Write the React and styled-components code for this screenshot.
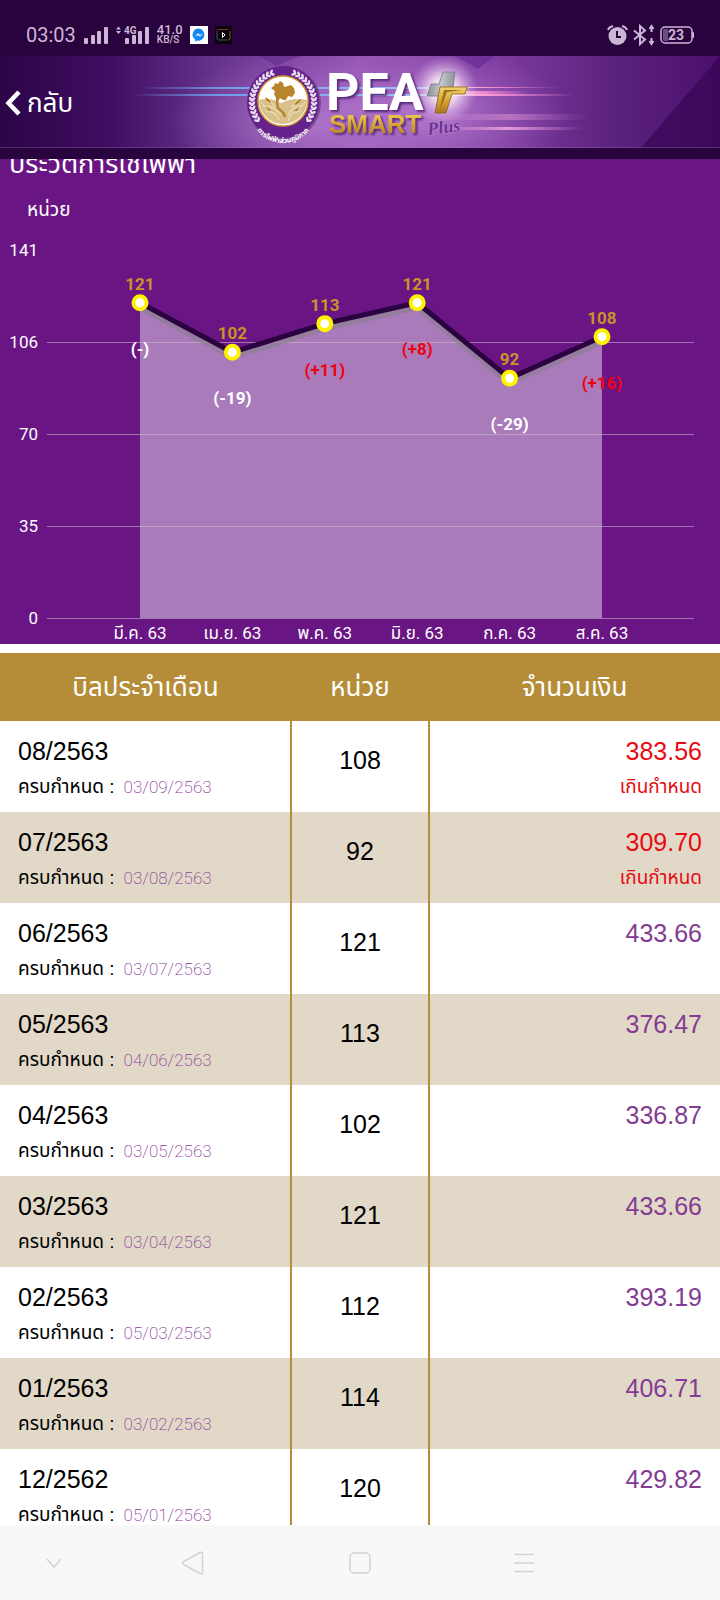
import styled, { createGlobalStyle } from 'styled-components';

const GlobalStyle = createGlobalStyle`
  * {
    box-sizing: border-box;
  }
  body {
    margin: 0;
    font-family: 'Liberation Sans', 'Noto Sans Thai', sans-serif;
    background: #fff;
  }
`;

const Screen = styled.div`
  display: flex;
  flex-direction: column;
  height: 100vh;
  overflow: hidden;
`;

const StatusBar = styled.div`
  display: flex;
  align-items: center;
  justify-content: space-between;
  height: 56px;
  flex: none;
  padding: 14px 26px 0;
  background: #29033d;
  color: #cbb6d6;
  font-family: Roboto, sans-serif;
`;

const StatusGroup = styled.div`
  display: flex;
  align-items: center;
  gap: ${props => props.$gap}px;
`;

const Clock = styled.span`
  font-size: 20px;
`;

const Speed = styled.span`
  display: flex;
  flex-direction: column;
  font-size: 13px;
  line-height: 10px;
  font-weight: 500;
`;

const SpeedUnit = styled.span`
  font-size: 10px;
`;

const Header = styled.header`
  position: relative;
  display: flex;
  align-items: center;
  flex: none;
  height: 103px;
  padding-bottom: 10px;
  background: #29033d;
`;

const Banner = styled.svg`
  position: absolute;
  top: 0;
  left: 0;
  width: 100%;
  height: 92px;
`;

const LogoText = styled.text`
  filter: drop-shadow(2px 2px 1px #56287a);
`;

const BackButton = styled.button`
  position: relative;
  display: flex;
  align-items: center;
  gap: 6px;
  padding: 0 5px;
  border: none;
  background: none;
  color: #fff;
  font-family: inherit;
  font-size: 26px;
  line-height: 40px;
  cursor: pointer;
`;

const Content = styled.main`
  flex: 1;
  min-height: 0;
  overflow: hidden;
`;

const History = styled.section`
  background: #6a1584;
  color: #fff;
  margin-bottom: 9px;
`;

/* the page is scrolled, so only the lower part of the title shows */
const TitleClip = styled.div`
  display: flex;
  align-items: flex-end;
  height: 24px;
  overflow: hidden;
  padding: 0 9px;
`;

const Title = styled.h1`
  margin: 0;
  font-size: 27px;
  line-height: 38px;
  font-weight: 400;
`;

const UnitLabel = styled.div`
  padding: 13px 27px 12px;
  font-size: 19px;
  line-height: 28px;
`;

const ChartSvg = styled.svg`
  display: block;
  width: 100%;
  font-family: Roboto, 'Noto Sans Thai', sans-serif;
  font-size: 17px;
`;

const Table = styled.table`
  width: 100%;
  table-layout: fixed;
  border-collapse: collapse;
`;

const HeadCell = styled.th`
  width: ${props => props.$width};
  height: 68px;
  padding: 0;
  background: #b58d38;
  color: #fff;
  font-size: 26px;
  line-height: 36px;
  font-weight: 400;
`;

const Row = styled.tr`
  background: #fff;
  &:nth-child(even) {
    background: #e1d8c8;
  }
`;

const Cell = styled.td`
  padding: ${props => (props.$middle ? '21px' : '12px')} 18px 11px;
  vertical-align: top;
  text-align: ${props => props.$align || 'left'};
  border-left: ${props => (props.$line ? '2px solid #b58d38' : 'none')};
`;

const Main = styled.div`
  font-size: 25px;
  line-height: 36px;
  color: ${props => props.$color || '#000'};
`;

const Sub = styled.div`
  margin-top: 4px;
  font-size: 19px;
  line-height: 28px;
  color: ${props => props.$color || '#000'};
`;

const DueDate = styled.span`
  margin-left: 9px;
  font-family: Roboto, sans-serif;
  font-size: 17px;
  font-weight: 200;
  color: #8a3f98;
`;

const NavBar = styled.nav`
  display: grid;
  grid-template-columns: 15% 23.6% 22.8% 22.8%;
  flex: none;
  height: 75px;
  background: #f8f8f8;
`;

const NavButton = styled.button`
  display: flex;
  align-items: center;
  justify-content: center;
  padding: 0;
  border: none;
  background: none;
  color: #d2d2d2;
`;

const points = [
  { month: 'มี.ค. 63', value: 121, diff: '(-)' },
  { month: 'เม.ย. 63', value: 102, diff: '(-19)' },
  { month: 'พ.ค. 63', value: 113, diff: '(+11)' },
  { month: 'มิ.ย. 63', value: 121, diff: '(+8)' },
  { month: 'ก.ค. 63', value: 92, diff: '(-29)' },
  { month: 'ส.ค. 63', value: 108, diff: '(+16)' },
];

const bills = [
  { month: '08/2563', due: '03/09/2563', units: 108, amount: '383.56', overdue: true },
  { month: '07/2563', due: '03/08/2563', units: 92, amount: '309.70', overdue: true },
  { month: '06/2563', due: '03/07/2563', units: 121, amount: '433.66' },
  { month: '05/2563', due: '04/06/2563', units: 113, amount: '376.47' },
  { month: '04/2563', due: '03/05/2563', units: 102, amount: '336.87' },
  { month: '03/2563', due: '03/04/2563', units: 121, amount: '433.66' },
  { month: '02/2563', due: '05/03/2563', units: 112, amount: '393.19' },
  { month: '01/2563', due: '03/02/2563', units: 114, amount: '406.71' },
  { month: '12/2562', due: '05/01/2563', units: 120, amount: '429.82' },
];

const Signal = ({ network }) => (
  <svg width={network ? 34 : 26} height="20" viewBox={network ? '-8 0 34 20' : '0 0 26 20'} fill="currentColor">
    <rect x="1" y="13" width="4" height="6" rx="1" />
    <rect x="8" y="10" width="4" height="9" rx="1" />
    <rect x="14" y="6" width="4" height="13" rx="1" />
    <rect x="21" y="2" width="4" height="17" rx="1" />
    {network && (
      <>
        <path d="M-8 4.500L-5.500 1.500L-3 4.500ZM-8 6L-5.500 9L-3 6Z" />
        <rect x="0" y="1" width="13" height="9" fill="#29033d" />
        <text x="0" y="9" fontSize="10" fontWeight="700">4G</text>
      </>
    )}
  </svg>
);

const MessengerIcon = () => (
  <svg width="18" height="18" viewBox="0 0 18 18">
    <rect width="18" height="18" fill="#fff" />
    <path d="M9 2.500a6.300 6.100 0 0 0-3.800 11v2.200l2-1.100A6.300 6.100 0 1 0 9 2.500Z" fill="#1686f5" />
    <path d="M5 10.500L8 7.300L10 9L13 7.300L10 10.500L8 8.900Z" fill="#fff" />
  </svg>
);

const RecorderIcon = () => (
  <svg width="17" height="18" viewBox="0 0 17 18">
    <rect width="17" height="18" fill="#0c0409" />
    <path d="M2 7V5Q2 3.500 4 3.500H13" fill="none" stroke="#80332e" />
    <path d="M15 5V13Q15 14 13 14" fill="none" stroke="#6a5c2c" />
    <path d="M12 14H4Q2 14 2 12V7" fill="none" stroke="#28606c" />
    <path d="M7.500 6.500L10 9L7.500 11.500Z" fill="none" stroke="#fff" />
  </svg>
);

const AlarmIcon = () => (
  <svg width="21" height="22" viewBox="0 0 21 22" fill="none" stroke="currentColor" strokeWidth="2">
    <circle cx="10.500" cy="12" r="9" fill="currentColor" stroke="none" />
    <path d="M1 6Q2 3 6 2M20 6Q19 3 15 2" />
    <path d="M10 7V13H14" stroke="#29033d" />
  </svg>
);

const BluetoothIcon = () => (
  <svg width="22" height="22" viewBox="0 0 22 22" fill="none" stroke="currentColor" strokeWidth="2">
    <path d="M1 6.500L12 15.500L7 20V2L12 6.500L1 15.500" />
    <path d="M18.500 2V8M18.500 14V20" />
    <path d="M16.500 5L18.500 2L20.500 5M16.500 17L18.500 20L20.500 17" />
  </svg>
);

const BatteryIcon = () => (
  <svg width="34" height="18" viewBox="0 0 34 18">
    <rect x="1" y="1" width="31" height="16" rx="4" fill="none" stroke="currentColor" strokeWidth="1.500" />
    <path d="M4 3H8V15H4Q3 15 3 14V4Q3 3 4 3Z" fill="#6d4d80" />
    <rect x="32" y="6" width="2" height="6" rx="1" fill="currentColor" />
    <text x="16" y="14" textAnchor="middle" fontSize="14" fontWeight="700" fill="currentColor">23</text>
  </svg>
);

const leaves = [...Array(14).keys()].map(i => 142 + i * 8);

const Seal = () => (
  <g transform="translate(283 46)">
    <circle r="37" cx="1" cy="1" fill="#5d3470" opacity="0.6" />
    <circle r="36" fill="#65228c" />
    {[1, -1].map(side => (
      <g key={side} transform={`scale(${side} 1)`} fill="#e9dcf1">
        {leaves.map(angle => (
          <g key={angle} transform={`rotate(${angle}) translate(31 0)`}>
            <ellipse cx="2" cy="0" rx="2.600" ry="1.300" transform="rotate(50)" />
            <ellipse cx="-2" cy="0" rx="2.600" ry="1.300" transform="rotate(-50)" />
          </g>
        ))}
      </g>
    ))}
    <circle r="25" cy="-1" fill="#fff" stroke="#d69d2c" strokeWidth="1.500" />
    <path d="M-24 -2Q-12 -5 -2 1Q10 -5 24 -2A24 24 0 0 1 -24 -2Z" fill="#d8c08b" />
    <path
      d="M-20 4Q-10 3 -2 13M-18 10Q-8 8 -4 18M20 4Q10 3 5 13M18 10Q8 8 5 19M-14 -3L-8 5M16 -3L9 5M-22 0L-14 9M22 0L15 9"
      fill="none"
      stroke="#eddcb0"
      strokeWidth="1.200"
    />
    <path d="M-18 -5Q-13 -3 -12 1Q-17 -1 -18 -5ZM18 -3Q13 -1 11 3Q17 1 18 -3ZM-18 4L-12 8L-14 9ZM17 5L11 9L14 9Z" fill="#a97820" />
    <path
      d="M-12 -14L-9 -16L-8 -19L-5 -18L-3 -21L0 -19L1 -15L5 -16L8 -17L11 -14L12 -9L9 -5L5 -6L3 -2L0 -2L-3 -4L-5 0L-4 5L-1 8L2 11L3 15L1 15L-2 10L-6 7L-7 2L-7 -4L-9 -8L-8 -11Z"
      fill="#b8852a"
    />
    <path id="sealArc" d="M-33 8A33 33 0 0 0 33 8" fill="none" />
    <text fontSize="7" fontWeight="700" fill="#fff" textAnchor="middle">
      <textPath href="#sealArc" startOffset="50%">การไฟฟ้าส่วนภูมิภาค</textPath>
    </text>
  </g>
);

const HeaderBanner = () => (
  <Banner viewBox="0 0 720 92" preserveAspectRatio="xMidYMid slice" aria-label="PEA Smart Plus">
    <defs>
      <linearGradient id="base">
        <stop offset="0" stopColor="#2c0548" />
        <stop offset="0.15" stopColor="#3f0d61" />
        <stop offset="0.3" stopColor="#66338c" />
        <stop offset="0.5" stopColor="#9657b6" />
        <stop offset="0.7" stopColor="#7b3b9e" />
        <stop offset="0.85" stopColor="#5c227f" />
        <stop offset="1" stopColor="#4a106c" />
      </linearGradient>
      <radialGradient id="glow">
        <stop offset="0" stopColor="#c08ad8" stopOpacity="0.7" />
        <stop offset="1" stopColor="#b070cc" stopOpacity="0" />
      </radialGradient>
      <radialGradient id="flare">
        <stop offset="0" stopColor="#fff" />
        <stop offset="0.4" stopColor="#fff0fa" stopOpacity="0.8" />
        <stop offset="1" stopColor="#e0b0ef" stopOpacity="0" />
      </radialGradient>
      <linearGradient id="blue">
        <stop offset="0" stopColor="#66a4ee" stopOpacity="0" />
        <stop offset="0.3" stopColor="#6f9fea" />
        <stop offset="1" stopColor="#a9c8f6" />
      </linearGradient>
      <linearGradient id="pink">
        <stop offset="0" stopColor="#ffe0f4" />
        <stop offset="0.5" stopColor="#f083cc" />
        <stop offset="1" stopColor="#c77bd0" stopOpacity="0" />
      </linearGradient>
      <linearGradient id="haze">
        <stop offset="0" stopColor="#d98fd4" stopOpacity="0" />
        <stop offset="0.5" stopColor="#e59bd6" />
        <stop offset="1" stopColor="#c77bd0" stopOpacity="0" />
      </linearGradient>
      <linearGradient id="gold" x2="0" y2="1">
        <stop offset="0" stopColor="#f6d56b" />
        <stop offset="0.5" stopColor="#d9a634" />
        <stop offset="1" stopColor="#a87720" />
      </linearGradient>
      <linearGradient id="silver">
        <stop offset="0" stopColor="#8b9097" />
        <stop offset="0.5" stopColor="#c4c8cc" />
        <stop offset="1" stopColor="#8d939b" />
      </linearGradient>
    </defs>
    <rect width="720" height="92" fill="url(#base)" />
    <ellipse cx="300" cy="65" rx="130" ry="70" fill="url(#glow)" />
    <ellipse cx="430" cy="60" rx="140" ry="70" fill="url(#glow)" />
    <path d="M720 0V92H641Z" fill="#350452" opacity="0.65" />
    <path d="M260 0H300L276 10ZM455 0H495L478 13Z" fill="#5b238a" opacity="0.5" />
    <rect x="140" y="31" width="300" height="2" fill="url(#blue)" />
    <rect x="130" y="38" width="310" height="2" fill="url(#blue)" />
    <rect x="440" y="31" width="120" height="1" fill="url(#pink)" />
    <rect x="440" y="35" width="90" height="3" fill="url(#pink)" />
    <rect x="440" y="38" width="135" height="2" fill="url(#pink)" />
    <rect x="430" y="58" width="160" height="6" fill="url(#haze)" opacity="0.5" />
    <rect x="430" y="71" width="155" height="3" fill="url(#haze)" />
    <rect y="91" width="720" height="1" fill="#a97cc4" opacity="0.3" />
    <Seal />
    <ellipse cx="444" cy="34" rx="34" ry="34" fill="url(#flare)" />
    <LogoText x="326" y="54" fontFamily="Roboto, sans-serif" fontSize="52" fontWeight="700" fill="#fff">
      PEA
    </LogoText>
    <LogoText x="329" y="77" fontSize="26" fontWeight="700" fill="url(#gold)">
      SMART
    </LogoText>
    <path d="M443 16H455L453 32H442L440 40H427L431 28H439Z" fill="url(#silver)" stroke="#767b85" strokeWidth="0.800" />
    <path d="M440 31H467L465 38H452L446 57H435Z" fill="url(#gold)" stroke="#8a6018" strokeWidth="0.800" />
    <path d="M444 34H463L447 36L440 53Z" fill="#6d450d" opacity="0.65" />
    <text
      x="428"
      y="79"
      transform="rotate(-7 428 79)"
      fontFamily="'Liberation Serif', serif"
      fontSize="18"
      fontStyle="italic"
      fontWeight="700"
      fill="#70309a"
      stroke="#c08fd0"
      strokeWidth="1"
      paintOrder="stroke"
    >
      Plus
    </text>
  </Banner>
);

const BASE = 382;
const xAt = i => 140 + i * 92.4;
const yAt = value => BASE - value * 2.605;

const Chart = () => {
  const line = points.map((p, i) => `${xAt(i)},${yAt(p.value)}`).join(' ');
  return (
    <ChartSvg viewBox="0 0 720 408">
      <polygon points={`140,${BASE} ${line} 602,${BASE}`} fill="#a97bba" />
      {[106, 70, 35, 0].map((tick, i) => (
        <line key={tick} x1="47" x2="694" y1={106.500 + i * 92} y2={106.500 + i * 92} stroke="#c9b8c9" strokeOpacity="0.6" />
      ))}
      {[141, 106, 70, 35, 0].map((tick, i) => (
        <text key={tick} x="38" y={20 + i * 92} textAnchor="end" fill="#fff">{tick}</text>
      ))}
      <polyline points={line} transform="translate(0 5)" fill="none" stroke="#808080" strokeOpacity="0.5" strokeWidth="5" />
      <polyline points={line} fill="none" stroke="#2a0340" strokeWidth="5" />
      {points.map((p, i) => (
        <g key={p.month} textAnchor="middle">
          <circle cx={xAt(i)} cy={yAt(p.value)} r="6.500" fill="#fff" stroke="#fff200" strokeWidth="4" />
          <text x={xAt(i)} y={yAt(p.value) - 13} fontWeight="700" fill="#c8922c">{p.value}</text>
          <text x={xAt(i)} y={yAt(p.value) + 52} fontWeight="700" fill={p.diff.includes('+') ? '#f0000f' : '#fff'}>
            {p.diff}
          </text>
          <text x={xAt(i)} y={403} fill="#fff">{p.month}</text>
        </g>
      ))}
    </ChartSvg>
  );
};

const BillRow = ({ bill }) => {
  const amountColor = bill.overdue ? '#e80b12' : '#843b93';
  return (
    <Row>
      <Cell>
        <Main>{bill.month}</Main>
        <Sub>
          ครบกำหนด :<DueDate>{bill.due}</DueDate>
        </Sub>
      </Cell>
      <Cell $align="center" $middle $line>
        <Main>{bill.units}</Main>
      </Cell>
      <Cell $align="right" $line>
        <Main $color={amountColor}>{bill.amount}</Main>
        {bill.overdue && <Sub $color={amountColor}>เกินกำหนด</Sub>}
      </Cell>
    </Row>
  );
};

const App = () => (
  <Screen>
    <GlobalStyle />
    <StatusBar>
      <StatusGroup $gap={7}>
        <Clock>03:03</Clock>
        <Signal />
        <Signal network />
        <Speed>
          <span>41.0</span>
          <SpeedUnit>KB/S</SpeedUnit>
        </Speed>
        <MessengerIcon />
        <RecorderIcon />
      </StatusGroup>
      <StatusGroup $gap={5}>
        <AlarmIcon />
        <BluetoothIcon />
        <BatteryIcon />
      </StatusGroup>
    </StatusBar>
    <Header>
      <HeaderBanner />
      <BackButton type="button">
        <svg width="16" height="26" viewBox="0 0 16 26" fill="none" stroke="#fff" strokeWidth="4.500">
          <path d="M14 2L3.500 13L14 24" />
        </svg>
        กลับ
      </BackButton>
    </Header>
    <Content>
      <History>
        <TitleClip>
          <Title>ประวัติการใช้ไฟฟ้า</Title>
        </TitleClip>
        <UnitLabel>หน่วย</UnitLabel>
        <Chart />
      </History>
      <Table>
        <thead>
          <tr>
            <HeadCell $width="40.4%">บิลประจำเดือน</HeadCell>
            <HeadCell $width="19.2%">หน่วย</HeadCell>
            <HeadCell>จำนวนเงิน</HeadCell>
          </tr>
        </thead>
        <tbody>
          {bills.map(bill => (
            <BillRow key={bill.month} bill={bill} />
          ))}
        </tbody>
      </Table>
    </Content>
    <NavBar>
      <NavButton type="button" aria-label="Hide bar">
        <svg width="16" height="12" viewBox="0 0 16 12" fill="none" stroke="currentColor" strokeWidth="1.500">
          <path d="M1 2L8 10L15 2" />
        </svg>
      </NavButton>
      <NavButton type="button" aria-label="Back">
        <svg width="24" height="24" viewBox="0 0 24 24" fill="none" stroke="currentColor" strokeWidth="1.500">
          <path d="M19 1.500Q21.500 0.500 21.500 3V21Q21.500 23.500 19 22.500L2.500 13.500Q1 12 2.500 10.500Z" />
        </svg>
      </NavButton>
      <NavButton type="button" aria-label="Home">
        <svg width="22" height="22" viewBox="0 0 22 22" fill="none" stroke="currentColor" strokeWidth="1.500">
          <rect x="1" y="1" width="20" height="20" rx="4" />
        </svg>
      </NavButton>
      <NavButton type="button" aria-label="Recent apps">
        <svg width="22" height="20" viewBox="0 0 22 20" stroke="currentColor" strokeWidth="1.500">
          <path d="M1 1.500H21M1 10H21M1 18.500H21" />
        </svg>
      </NavButton>
    </NavBar>
  </Screen>
);

export default App;
